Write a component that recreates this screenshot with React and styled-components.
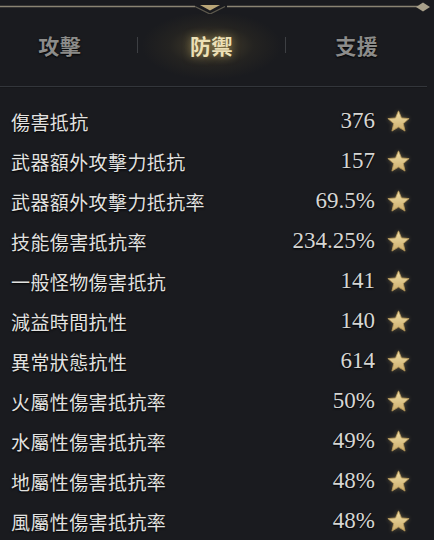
import React from "react";
import styled, { createGlobalStyle } from "styled-components";

const GlobalStyle = createGlobalStyle`
  html, body {
    margin: 0;
    padding: 0;
    background: #1a1b1f;
  }
`;

const Page = styled.div`
  width: 434px;
  height: 540px;
  overflow: hidden;
  background: #1a1b1f;
  font-family: "Noto Sans CJK TC", "Noto Sans", sans-serif;
`;

const TopFrame = styled.div`
  height: 14px;
  svg {
    display: block;
  }
`;

const TabBar = styled.div`
  display: flex;
  align-items: center;
  height: 72px;
  width: 427px;
  border-bottom: 1px solid #33363b;
  box-shadow: 0 1px 0 #16171a;
`;

const Tab = styled.div`
  width: ${(p) => p.$w}px;
  margin-right: ${(p) => p.$mr || 0}px;
  height: 100%;
  box-sizing: border-box;
  padding-bottom: 10px;
  display: flex;
  align-items: center;
  justify-content: center;
  font-size: 21px;
  font-weight: 700;
  letter-spacing: 0.5px;
  color: ${(p) => (p.$active ? "#ece0b6" : "#8c8c8a")};
  text-shadow: ${(p) =>
    p.$active ? "0 0 8px rgba(220, 190, 110, 0.6)" : "0 1px 2px #000"};
  background: ${(p) =>
    p.$active
      ? "radial-gradient(ellipse 70px 34px at 50% 44%, rgba(130, 114, 64, 0.45), rgba(75, 66, 40, 0.2) 60%, rgba(26, 27, 31, 0) 100%)"
      : "none"};
`;

const Sep = styled.div`
  width: 1px;
  height: 16px;
  margin-bottom: 10px;
  background: #3d3f43;
`;

const List = styled.div`
  padding-top: 14px;
`;

const Row = styled.div`
  display: flex;
  align-items: center;
  height: 40px;
  padding-left: 11px;
  padding-right: 23px;
`;

const Label = styled.div`
  flex: 1;
  font-size: 19px;
  color: #e2e2e0;
  letter-spacing: 0.4px;
  text-shadow: 0 1px 2px #000;
`;

const Value = styled.div`
  font-family: "Liberation Serif", "DejaVu Serif", serif;
  font-size: 23px;
  color: #d6d6d4;
  text-shadow: 0 1px 2px #000;
`;

const StarBox = styled.div`
  width: 25px;
  height: 25px;
  margin-left: 11px;
  svg {
    display: block;
    filter: drop-shadow(0 0 2px rgba(230, 200, 120, 0.35));
  }
`;

const Star = () => (
  <StarBox>
    <svg width="25" height="25" viewBox="0 0 24 24">
      <defs>
        <linearGradient id="sg" x1="0" y1="0" x2="0" y2="1">
          <stop offset="0" stopColor="#f2e1ab" />
          <stop offset="1" stopColor="#cbac6a" />
        </linearGradient>
      </defs>
      <path
        d="M12 1.8 L14.9 8.6 L22.2 9.2 L16.6 14 L18.3 21.2 L12 17.4 L5.7 21.2 L7.4 14 L1.8 9.2 L9.1 8.6 Z"
        fill="url(#sg)"
        stroke="#b8995a"
        strokeWidth="0.8"
        strokeLinejoin="round"
      />
    </svg>
  </StarBox>
);

const rows = [
  ["傷害抵抗", "376"],
  ["武器額外攻擊力抵抗", "157"],
  ["武器額外攻擊力抵抗率", "69.5%"],
  ["技能傷害抵抗率", "234.25%"],
  ["一般怪物傷害抵抗", "141"],
  ["減益時間抗性", "140"],
  ["異常狀態抗性", "614"],
  ["火屬性傷害抵抗率", "50%"],
  ["水屬性傷害抵抗率", "49%"],
  ["地屬性傷害抵抗率", "48%"],
  ["風屬性傷害抵抗率", "48%"],
];

export default function App() {
  return (
    <Page>
      <GlobalStyle />
      <TopFrame>
        <svg width="434" height="14" viewBox="0 0 434 14">
          <line x1="0" y1="6.5" x2="195" y2="6.5" stroke="#8a8473" strokeWidth="1.4" />
          <line x1="227" y1="6.5" x2="418" y2="6.5" stroke="#8a8473" strokeWidth="1.4" />
          <path d="M195 6.5 L210 14 L225 6.5" fill="none" stroke="#5e5a4e" strokeWidth="1.3" />
          <path d="M200 5 L220 5 L210 10.5 Z" fill="#b9a678" />
          <path d="M416 7 L423 2.5 L430 7 L423 11.5 Z" fill="#a8a08a" />
        </svg>
      </TopFrame>
      <TabBar>
        <Tab $w={120} $mr={17}>攻擊</Tab>
        <Sep />
        <Tab $w={148} $active>防禦</Tab>
        <Sep />
        <Tab $w={141}>支援</Tab>
      </TabBar>
      <List>
        {rows.map(([label, value]) => (
          <Row key={label}>
            <Label>{label}</Label>
            <Value>{value}</Value>
            <Star />
          </Row>
        ))}
      </List>
    </Page>
  );
}
